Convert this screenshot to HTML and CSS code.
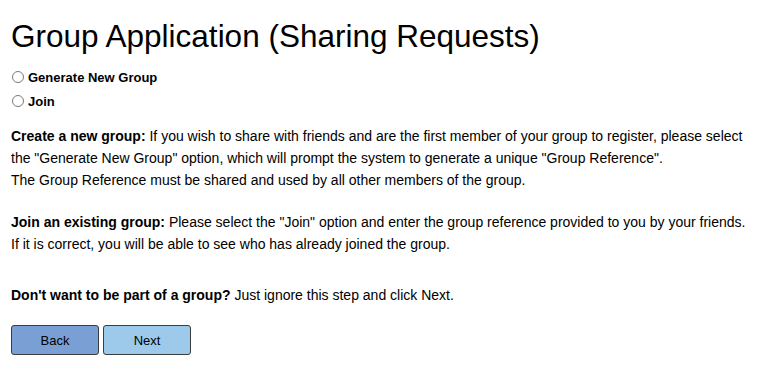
FILE: index.html
```html
<!DOCTYPE html>
<html>
<head>
<meta charset="utf-8">
<link rel="stylesheet" href="styles.css">
</head>
<body>
<div class="page">
  <h1 class="title">Group Application (Sharing Requests)</h1>
  <div class="options">
    <label class="option"><input type="radio" name="grp" class="radio"><span>Generate New Group</span></label>
    <label class="option"><input type="radio" name="grp" class="radio"><span>Join</span></label>
  </div>
  <p class="para first"><b>Create a new group:</b> If you wish to share with friends and are the first member of your group to register, please select the "Generate New Group" option, which will prompt the system to generate a unique "Group Reference".<br>The Group Reference must be shared and used by all other members of the group.</p>
  <p class="para join"><b>Join an existing group:</b> Please select the "Join" option and enter the group reference provided to you by your friends.<br>If it is correct, you will be able to see who has already joined the group.</p>
  <p class="para skip"><b>Don't want to be part of a group?</b> Just ignore this step and click Next.</p>
  <div class="buttons">
    <button class="btn back">Back</button>
    <button class="btn next">Next</button>
  </div>
</div>
</body>
</html>
```
FILE: styles.css
```css
html, body { margin: 0; padding: 0; background: #fff; }
body { font-family: "Liberation Sans", Arial, sans-serif; color: #000; }
.page { padding: 18px 11px 0 11px; }
.title { font-size: 31.5px; font-weight: normal; margin: 0 0 13px 0; line-height: 37px; }
.options { display: flex; flex-direction: column; gap: 6px; }
.option { display: flex; align-items: center; font-size: 13px; font-weight: bold; height: 18px; }
.radio { width: 12px; height: 12px; margin: 0 4px 0 1px; appearance: none; border: 1px solid #7a7a7a; border-radius: 50%; background: #fff; }
.para { font-size: 14px; line-height: 22px; margin: 0; }
.first { margin-top: 15px; }
.join { margin-top: 20px; }
.skip { margin-top: 29px; }
.buttons { display: flex; gap: 4px; margin-top: 19px; }
.btn { width: 88px; height: 30px; border: 1px solid #3c3c3c; border-radius: 3px; font-family: "Liberation Sans", Arial, sans-serif; font-size: 13px; color: #000; padding: 0; }
.back { background: #7a9fd4; }
.next { background: #9dcaea; }
```
